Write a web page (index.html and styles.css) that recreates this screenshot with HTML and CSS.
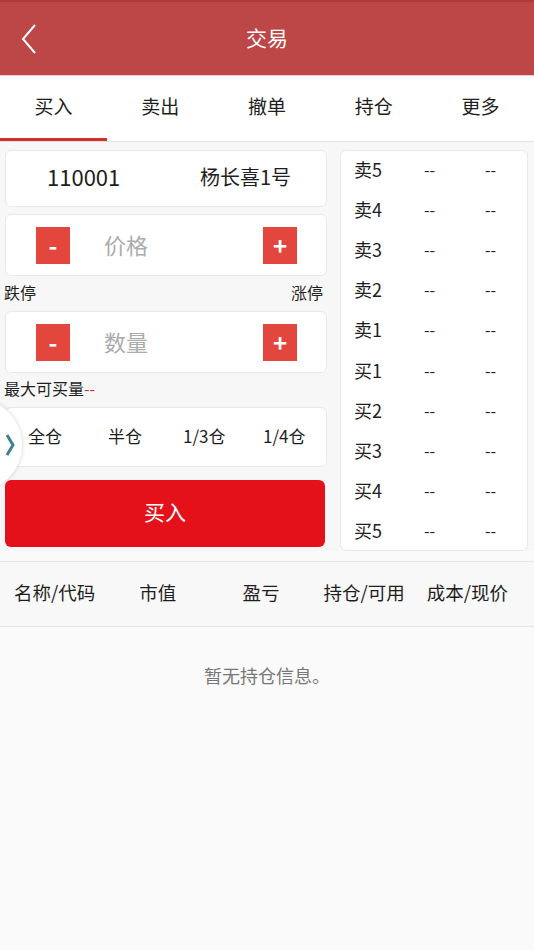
FILE: index.html
```html
<!DOCTYPE html>
<html lang="zh-CN">
<head>
<meta charset="utf-8">
<title>交易</title>
<link rel="stylesheet" href="styles.css">
</head>
<body>
<header class="topbar">
  <svg class="back" width="18" height="32" viewBox="0 0 18 32"><path d="M15 2 L3 16 L15 30" fill="none" stroke="#fff" stroke-width="2"/></svg>
  <div class="title">交易</div>
</header>
<nav class="tabs">
  <div class="tab active">买入</div>
  <div class="tab">卖出</div>
  <div class="tab">撤单</div>
  <div class="tab">持仓</div>
  <div class="tab">更多</div>
</nav>
<main class="main">
  <section class="left">
    <div class="card code-card">
      <span class="code">110001</span>
      <span class="name">杨长喜1号</span>
    </div>
    <div class="card step-card">
      <div class="stepbtn">-</div>
      <div class="placeholder">价格</div>
      <div class="stepbtn plus">+</div>
    </div>
    <div class="limit-row"><span>跌停</span><span>涨停</span></div>
    <div class="card step-card">
      <div class="stepbtn">-</div>
      <div class="placeholder">数量</div>
      <div class="stepbtn plus">+</div>
    </div>
    <div class="max-row">最大可买量<span class="red">--</span></div>
    <div class="card pos-card">
      <span>全仓</span><span>半仓</span><span>1/3仓</span><span>1/4仓</span>
    </div>
    <div class="buy-btn">买入</div>
  </section>
  <section class="card book">
    <div class="row"><span class="lbl">卖5</span><span class="d">--</span><span class="d">--</span></div>
    <div class="row"><span class="lbl">卖4</span><span class="d">--</span><span class="d">--</span></div>
    <div class="row"><span class="lbl">卖3</span><span class="d">--</span><span class="d">--</span></div>
    <div class="row"><span class="lbl">卖2</span><span class="d">--</span><span class="d">--</span></div>
    <div class="row"><span class="lbl">卖1</span><span class="d">--</span><span class="d">--</span></div>
    <div class="row"><span class="lbl">买1</span><span class="d">--</span><span class="d">--</span></div>
    <div class="row"><span class="lbl">买2</span><span class="d">--</span><span class="d">--</span></div>
    <div class="row"><span class="lbl">买3</span><span class="d">--</span><span class="d">--</span></div>
    <div class="row"><span class="lbl">买4</span><span class="d">--</span><span class="d">--</span></div>
    <div class="row"><span class="lbl">买5</span><span class="d">--</span><span class="d">--</span></div>
  </section>
</main>
<div class="hold-head">
  <span>名称/代码</span><span>市值</span><span>盈亏</span><span>持仓/可用</span><span>成本/现价</span>
</div>
<div class="empty">暂无持仓信息。</div>
<div class="side-tab">
  <svg width="10" height="24" viewBox="0 0 10 24"><path d="M2 2 L8 12 L2 22" fill="none" stroke="#3f8096" stroke-width="3"/></svg>
</div>
</body>
</html>
```
FILE: styles.css
```css
* { box-sizing: border-box; }
html, body { margin: 0; padding: 0; }
body {
  width: 534px;
  min-height: 950px;
  background: #fafafa;
  font-family: "Noto Sans CJK SC", "Noto Sans", sans-serif;
  color: #1e1e1e;
  position: relative;
  overflow: hidden;
}
.topbar {
  height: 75px;
  background: #bd4646;
  border-top: 2px solid #a83c3c;
  display: flex;
  align-items: center;
  justify-content: center;
  position: relative;
  padding-bottom: 4px;
}
.back { position: absolute; left: 20px; top: 21px; }
.title { color: #fff; font-size: 21px; }
.tabs {
  display: flex;
  height: 67px;
  background: #fff;
  border-top: 1px solid #e7c9c9;
  border-bottom: 1px solid #e2e2e2;
}
.tab {
  flex: 1;
  display: flex;
  align-items: center;
  justify-content: center;
  font-size: 19px;
  padding-bottom: 6px;
}
.tab.active { border-bottom: 3px solid #d3302b; padding-bottom: 3px; }
.main {
  display: flex;
  gap: 13px;
  padding: 8px 6px 0 5px;
  background: #f7f7f7;
}
.left { width: 322px; flex-shrink: 0; display: flex; flex-direction: column; }
.card {
  background: #fff;
  border: 1px solid #e9e9e9;
  border-radius: 6px;
}
.code-card {
  height: 57px;
  display: flex;
  align-items: center;
  padding-left: 41px;
  padding-bottom: 5px;
  margin-bottom: 7px;
}
.code { font-size: 22px; width: 153px; }
.name { font-size: 20px; }
.step-card {
  height: 62px;
  display: flex;
  align-items: center;
  padding-left: 30px;
}
.stepbtn {
  width: 34px;
  height: 37px;
  background: #e2463d;
  color: #fff;
  font-size: 24px;
  font-weight: bold;
  display: flex;
  align-items: center;
  justify-content: center;
  line-height: 1;
}
.placeholder {
  width: 193px;
  padding-left: 34px;
  padding-bottom: 3px;
  font-size: 22px;
  color: #ababab;
}
.limit-row {
  height: 35px;
  display: flex;
  justify-content: space-between;
  align-items: center;
  font-size: 16px;
  padding: 0 4px 4px 0;
  margin-left: -1px;
}
.max-row {
  height: 34px;
  display: flex;
  align-items: center;
  font-size: 16px;
  margin-left: -1px;
  padding-bottom: 4px;
}
.red { color: #d9322c; }
.pos-card {
  height: 60px;
  display: grid;
  grid-template-columns: 80px 75px 80px 80px;
  align-items: center;
  padding-left: 22px;
  padding-bottom: 3px;
  font-size: 17px;
  margin-bottom: 13px;
}
.buy-btn {
  height: 67px;
  background: #e4111a;
  border-radius: 6px;
  color: #fff;
  font-size: 21px;
  display: flex;
  align-items: center;
  justify-content: center;
  width: 320px;
  padding-bottom: 5px;
}
.book {
  width: 188px;
  height: 401px;
  padding: 0 0 0 13px;
  flex-shrink: 0;
}
.row {
  height: 40.2px;
  display: flex;
  align-items: center;
  font-size: 18px;
  padding-bottom: 5px;
}
.lbl { width: 70px; flex-shrink: 0; }
.d { width: 61px; flex-shrink: 0; font-size: 16px; }
.hold-head {
  margin-top: 10px;
  height: 66px;
  background: #f8f8f8;
  border-top: 1px solid #e4e4e4;
  border-bottom: 1px solid #e4e4e4;
  display: grid;
  grid-template-columns: repeat(5, 1fr);
  padding: 0 15px 5px 3px;
  align-items: center;
  justify-items: center;
  font-size: 18.5px;
}
.empty {
  text-align: center;
  font-size: 18px;
  color: #777;
  padding-top: 35px;
}
.side-tab {
  position: absolute;
  left: -72px;
  top: 398px;
  width: 94px;
  height: 94px;
  border-radius: 50%;
  background: #fff;
  box-shadow: 0 0 4px rgba(0,0,0,0.18);
  display: flex;
  align-items: center;
  justify-content: flex-end;
  padding-right: 7px;
}
```
